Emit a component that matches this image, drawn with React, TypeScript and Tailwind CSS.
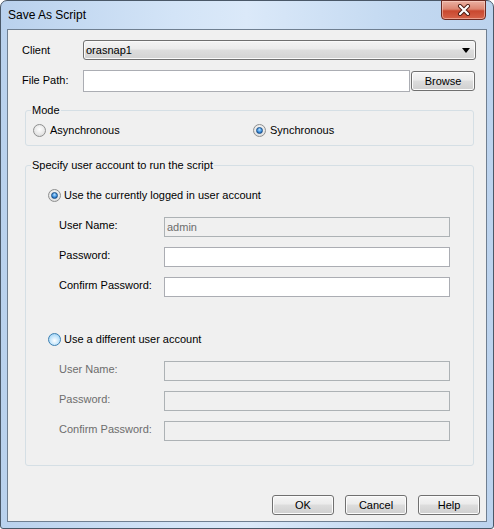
import React from "react";

// Win7 style "Save As Script" dialog

type RadioState = "off" | "on" | "hover";

const Radio: React.FC<{ state: RadioState }> = ({ state }) => {
  if (state === "hover") {
    return (
      <span className="relative flex h-[13px] w-[13px] shrink-0 items-center justify-center rounded-full border border-[#3c7fb1] bg-[radial-gradient(circle_at_50%_60%,#ffffff,#bfe3fb_55%,#8cc7ee)]" />
    );
  }
  return (
    <span className="flex h-[13px] w-[13px] shrink-0 items-center justify-center rounded-full border border-[#8e8f8f] bg-[radial-gradient(circle_at_50%_40%,#ffffff,#e6e6e6_60%,#cfcfcf)]">
      {state === "on" && (
        <span className="h-[7px] w-[7px] rounded-full border border-[#1b4f86] bg-[radial-gradient(circle_at_50%_35%,#b8e0ff,#3c8fdc_55%,#0f4c9a)]" />
      )}
    </span>
  );
};

const WinButton: React.FC<{ label: string; className?: string }> = ({
  label,
  className = "",
}) => (
  <button
    type="button"
    className={`flex h-[20px] items-center justify-center rounded-[3px] border border-[#707070] bg-[linear-gradient(180deg,#f6f6f6_0%,#ebebeb_45%,#dddddd_50%,#cfcfcf_100%)] text-[11px] leading-none text-black shadow-[inset_0_0_0_1px_#fcfcfc] ${className}`}
  >
    {label}
  </button>
);

const TextBox: React.FC<{ value?: string; disabled?: boolean }> = ({
  value = "",
  disabled,
}) => (
  <div
    className={`flex h-[20px] w-[286px] items-center px-[2px] text-[11px] ${
      disabled
        ? "border border-[#adb2b5] bg-[#f0f0f0] text-[#6d6d6d]"
        : "border border-[#abadb3] bg-white text-black"
    }`}
  >
    {value}
  </div>
);

const FieldRow: React.FC<{
  label: string;
  value?: string;
  disabled?: boolean;
  dimLabel?: boolean;
}> = ({ label, value, disabled, dimLabel }) => (
  <div className="flex items-start">
    <span
      className={`w-[105px] pt-[1px] leading-[14px] ${
        dimLabel ? "text-[#6d6d6d]" : "text-black"
      }`}
    >
      {label}
    </span>
    <TextBox value={value} disabled={disabled} />
  </div>
);

export default function App() {
  return (
    <div
      className="h-[529px] w-[494px] bg-white text-[11px] text-black"
      style={{ fontFamily: '"Liberation Sans", Arial, sans-serif' }}
    >
      <div className="flex h-full flex-col rounded-t-[7px] rounded-b-[3px] border border-[#4a5868] bg-[linear-gradient(90deg,#b9d1ed_0%,#d3e4f7_35%,#dbe9f9_50%,#c3d9f1_80%,#bcd3ee_100%)] px-[6px] pb-[6px]">
        {/* title bar */}
        <div className="relative flex h-[28px] items-center pl-[1px]">
          <span className="text-[12px] text-black">Save As Script</span>
          <div className="absolute right-[1px] top-[-1px] flex h-[20px] w-[45px] items-center justify-center rounded-b-[4px] border border-[#6b2a22] bg-[linear-gradient(180deg,#eab0a2_0%,#dc8571_45%,#c9482f_55%,#d6634a_100%)] shadow-[inset_0_0_0_1px_rgba(255,220,210,0.5)]">
            <svg width="14" height="12" viewBox="0 0 14 12">
              <path
                d="M3 2 L11 10 M11 2 L3 10"
                stroke="#4a1a12"
                strokeWidth="4"
                strokeLinecap="round"
              />
              <path
                d="M3 2 L11 10 M11 2 L3 10"
                stroke="#ffffff"
                strokeWidth="2.2"
                strokeLinecap="round"
              />
            </svg>
          </div>
        </div>

        {/* client area */}
        <div className="flex flex-1 flex-col border border-[#6f7f91] bg-[#f0f0f0]">
          {/* Client */}
          <div className="mt-[10px] flex items-start pl-[14px] pr-[10px]">
            <span className="w-[61px] pt-[3px] leading-[14px]">Client</span>
            <div className="flex h-[20px] flex-1 items-center justify-between rounded-[3px] border border-[#707070] bg-[linear-gradient(180deg,#f4f4f4_0%,#ebebeb_45%,#dddddd_50%,#d2d2d2_100%)] pl-[2px] pr-[5px] shadow-[inset_0_0_0_1px_#fafafa]">
              <span>orasnap1</span>
              <svg width="8" height="5" viewBox="0 0 8 5">
                <path d="M0 0 H8 L4 5 Z" fill="#000" />
              </svg>
            </div>
          </div>

          {/* File path */}
          <div className="mt-[10px] flex items-start pl-[14px] pr-[11px]">
            <span className="w-[61px] pt-[3px] leading-[14px]">File Path:</span>
            <div className="h-[22px] flex-1 border border-[#abadb3] bg-white" />
            <WinButton label="Browse" className="ml-[1px] mt-[1px] w-[64px]" />
          </div>

          {/* Mode */}
          <fieldset className="ml-[17px] mr-[12px] mt-[11px] rounded-[3px] border border-[#d5dfe5] pb-[8px] pl-[7px]">
            <legend className="ml-[-2px] px-[1px] leading-[14px]">Mode</legend>
            <div className="flex items-center pt-[6px]">
              <div className="flex w-[220px] items-center gap-[4px]">
                <Radio state="off" />
                <span className="leading-[14px]">Asynchronous</span>
              </div>
              <div className="flex items-center gap-[4px]">
                <Radio state="on" />
                <span className="leading-[14px]">Synchronous</span>
              </div>
            </div>
          </fieldset>

          {/* user account */}
          <fieldset className="ml-[17px] mr-[12px] mt-[12px] rounded-[3px] border border-[#d5dfe5] pb-[24px] pl-[22px]">
            <legend className="ml-[-17px] px-[1px] leading-[14px]">
              Specify user account to run the script
            </legend>
            <div className="flex items-center gap-[3px] pt-[16px]">
              <Radio state="on" />
              <span className="leading-[14px]">
                Use the currently logged in user account
              </span>
            </div>
            <div className="mt-[15px] flex flex-col gap-[10px] pl-[11px]">
              <FieldRow label="User Name:" value="admin" disabled />
              <FieldRow label="Password:" />
              <FieldRow label="Confirm Password:" />
            </div>

            <div className="mt-[35px] flex items-center gap-[3px]">
              <Radio state="hover" />
              <span className="leading-[14px]">Use a different user account</span>
            </div>
            <div className="mt-[15px] flex flex-col gap-[10px] pl-[11px]">
              <FieldRow label="User Name:" disabled dimLabel />
              <FieldRow label="Password:" disabled dimLabel />
              <FieldRow label="Confirm Password:" disabled dimLabel />
            </div>
          </fieldset>

          {/* buttons */}
          <div className="mt-auto flex justify-end gap-[11px] pb-[6px] pr-[6px]">
            <WinButton label="OK" className="w-[62px]" />
            <WinButton label="Cancel" className="w-[62px]" />
            <WinButton label="Help" className="w-[62px]" />
          </div>
        </div>
      </div>
    </div>
  );
}
